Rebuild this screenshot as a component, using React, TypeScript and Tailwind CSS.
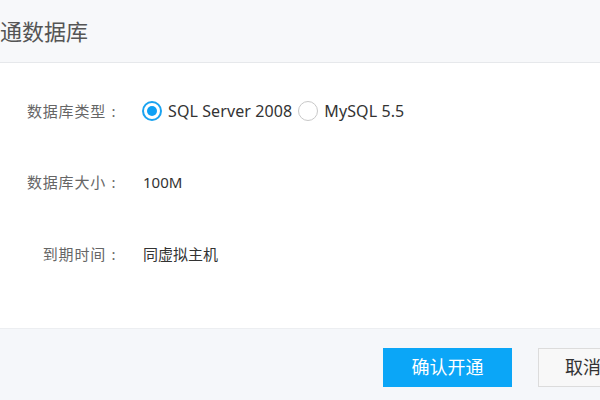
import { useState } from 'react';

const font = { fontFamily: '"Noto Sans", "Noto Sans CJK SC", sans-serif' };

function Radio({ checked, label, onClick }: { checked: boolean; label: string; onClick: () => void }) {
  return (
    <label className="flex items-center gap-[6px] cursor-pointer" onClick={onClick}>
      <span
        className={
          checked
            ? 'flex items-center justify-center w-[20px] h-[20px] rounded-full border-2 border-[#1aa3f0] bg-white'
            : 'flex items-center justify-center w-[20px] h-[20px] rounded-full border border-[#c8c8c8] bg-white'
        }
      >
        {checked && <span className="w-[10px] h-[10px] rounded-full bg-[#0ea0f5]" />}
      </span>
      <span className="text-[#333] text-[16px] tracking-[0.1px]">{label}</span>
    </label>
  );
}

function Label({ text }: { text: string }) {
  return (
    <div className="w-[121px] flex justify-end text-[#666]">
      <span className="tracking-[0.8px]">{text}</span>
      <span className="w-[15px] text-center">:</span>
    </div>
  );
}

export default function App() {
  const [dbType, setDbType] = useState('mssql');

  return (
    <div className="w-[600px] h-[400px] flex flex-col bg-white overflow-hidden" style={font}>
      <div className="h-[63px] shrink-0 flex items-center bg-[#f7f8fa] border-b border-[#e6e8eb]">
        <h1 className="-ml-[22px] text-[22px] text-[#555]">开通数据库</h1>
      </div>

      <div className="flex-1 flex flex-col pt-[36px] text-[15px]">
        <div className="flex items-center h-[24px]">
          <Label text="数据库类型" />
          <div className="ml-[21px] flex items-center gap-[6px]">
            <Radio checked={dbType === 'mssql'} label="SQL Server 2008" onClick={() => setDbType('mssql')} />
            <Radio checked={dbType === 'mysql'} label="MySQL 5.5" onClick={() => setDbType('mysql')} />
          </div>
        </div>
        <div className="flex items-center h-[24px] mt-[47px]">
          <Label text="数据库大小" />
          <div className="ml-[22px] text-[#333]">100M</div>
        </div>
        <div className="flex items-center h-[24px] mt-[48px]">
          <Label text="到期时间" />
          <div className="ml-[22px] text-[#333]">同虚拟主机</div>
        </div>
      </div>

      <div className="h-[72px] shrink-0 flex items-start pt-[19px] pl-[383px] gap-[26px] bg-[#f5f7fa] border-t border-[#eceef1]">
        <button
          type="button"
          className="w-[129px] h-[39px] shrink-0 bg-[#0ba6f7] text-white text-[18px]"
        >
          确认开通
        </button>
        <button
          type="button"
          className="w-[90px] h-[39px] shrink-0 bg-[#f8f8f8] border border-[#dcdcdc] text-[#333] text-[18px]"
        >
          取消
        </button>
      </div>
    </div>
  );
}
